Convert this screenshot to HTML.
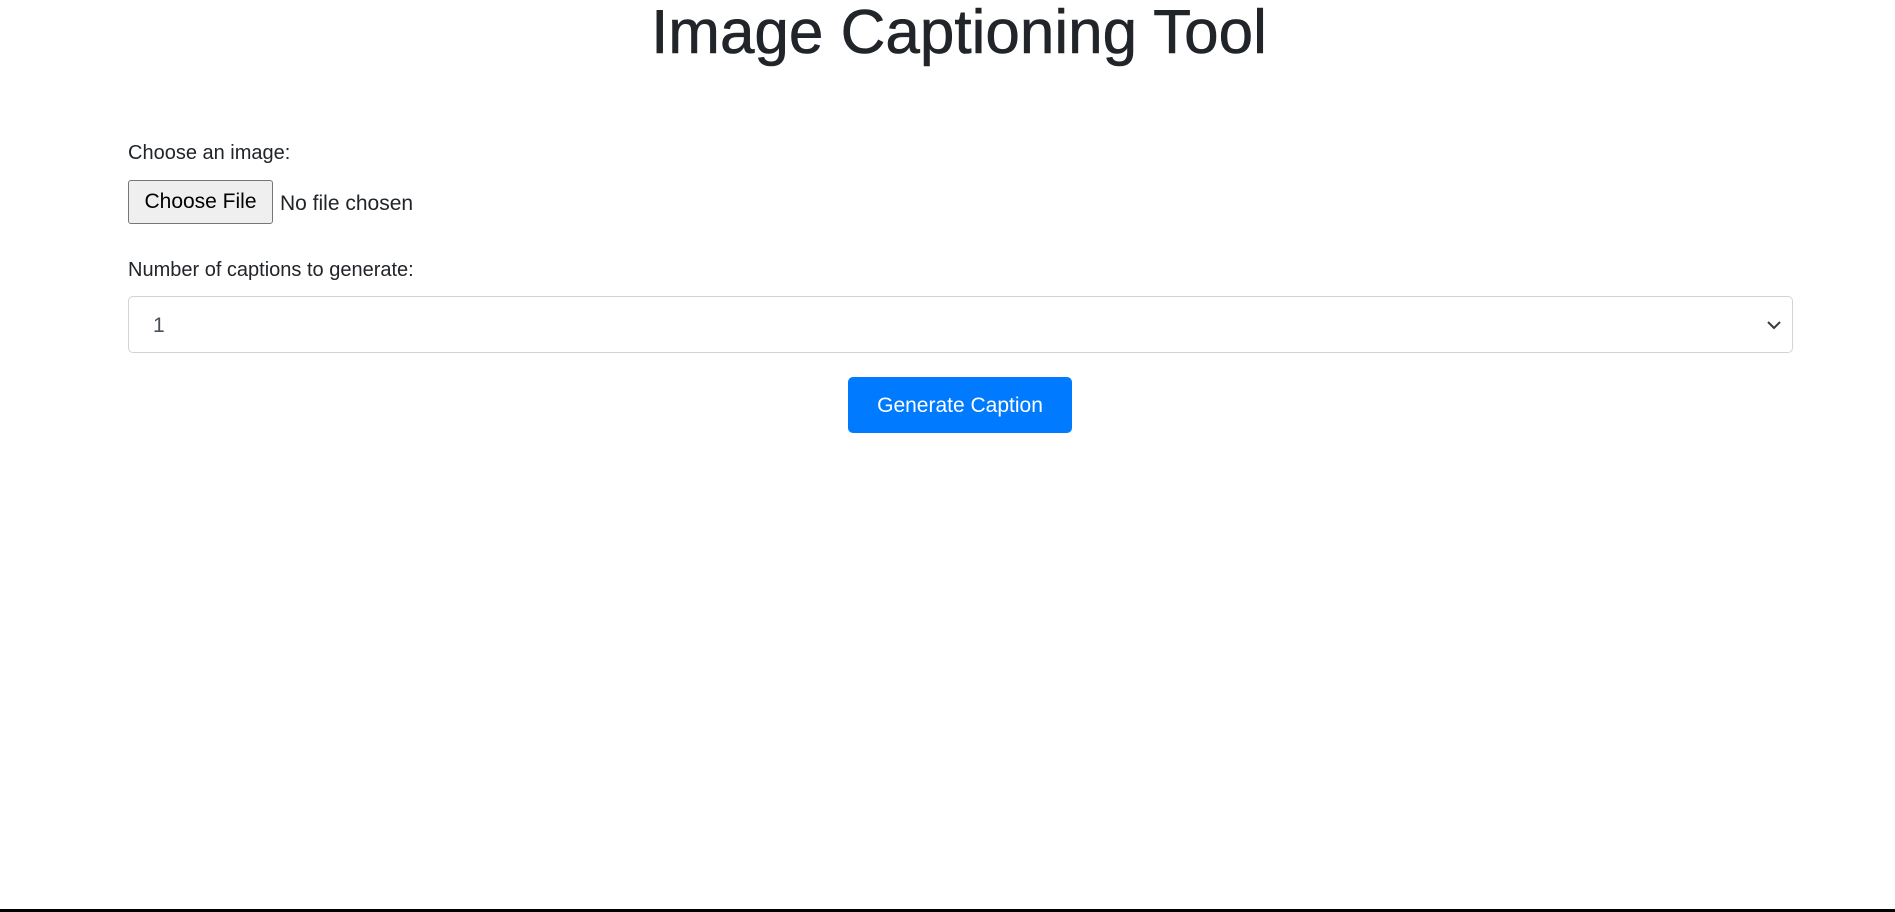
<!DOCTYPE html>
<html><head><meta charset="utf-8"><style>
body{margin:0;width:1895px;height:912px;background:#fff;font-family:"Liberation Sans",sans-serif;color:#212529;position:relative;overflow:hidden}
.a{position:absolute;white-space:nowrap}
h1{position:absolute;left:0;width:1918px;text-align:center;top:-3px;margin:0;font-size:62px;font-weight:500;line-height:72px;color:#212529;-webkit-text-stroke:0.6px #212529}
.lbl{font-size:20px;line-height:24px}
.fb{position:absolute;left:128px;top:180px;width:143px;height:42px;background:#efefef;border:1px solid #767676;border-radius:3px;font-size:21px;line-height:42px;text-align:center;color:#000;box-sizing:content-box}
.sel{position:absolute;left:128px;top:296px;width:1663px;height:55px;border:1px solid #ced4da;border-radius:5px}
.btn{position:absolute;left:848px;top:377px;width:224px;height:56px;background:#007bff;border-radius:5px;color:#fff;font-size:21px;line-height:58px;text-align:center}
.bar{position:absolute;left:0;top:909px;width:1895px;height:3px;background:#000}
</style></head><body>
<h1>Image Captioning Tool</h1>
<div class="a lbl" style="left:128px;top:141px">Choose an image:</div>
<div class="fb">Choose File</div>
<div class="a" style="left:280px;top:192px;font-size:21px;line-height:24px">No file chosen</div>
<div class="a lbl" style="left:128px;top:258px">Number of captions to generate:</div>
<div class="sel"><div class="a" style="left:24px;top:17px;font-size:21px;line-height:24px;color:#495057">1</div>
<svg class="a" style="right:10px;top:20px" width="16" height="16" viewBox="0 0 16 16"><path d="M2 5l6 6 6-6" fill="none" stroke="#343a40" stroke-width="2"/></svg></div>
<div class="btn">Generate Caption</div>
<div class="bar"></div>
</body></html>
